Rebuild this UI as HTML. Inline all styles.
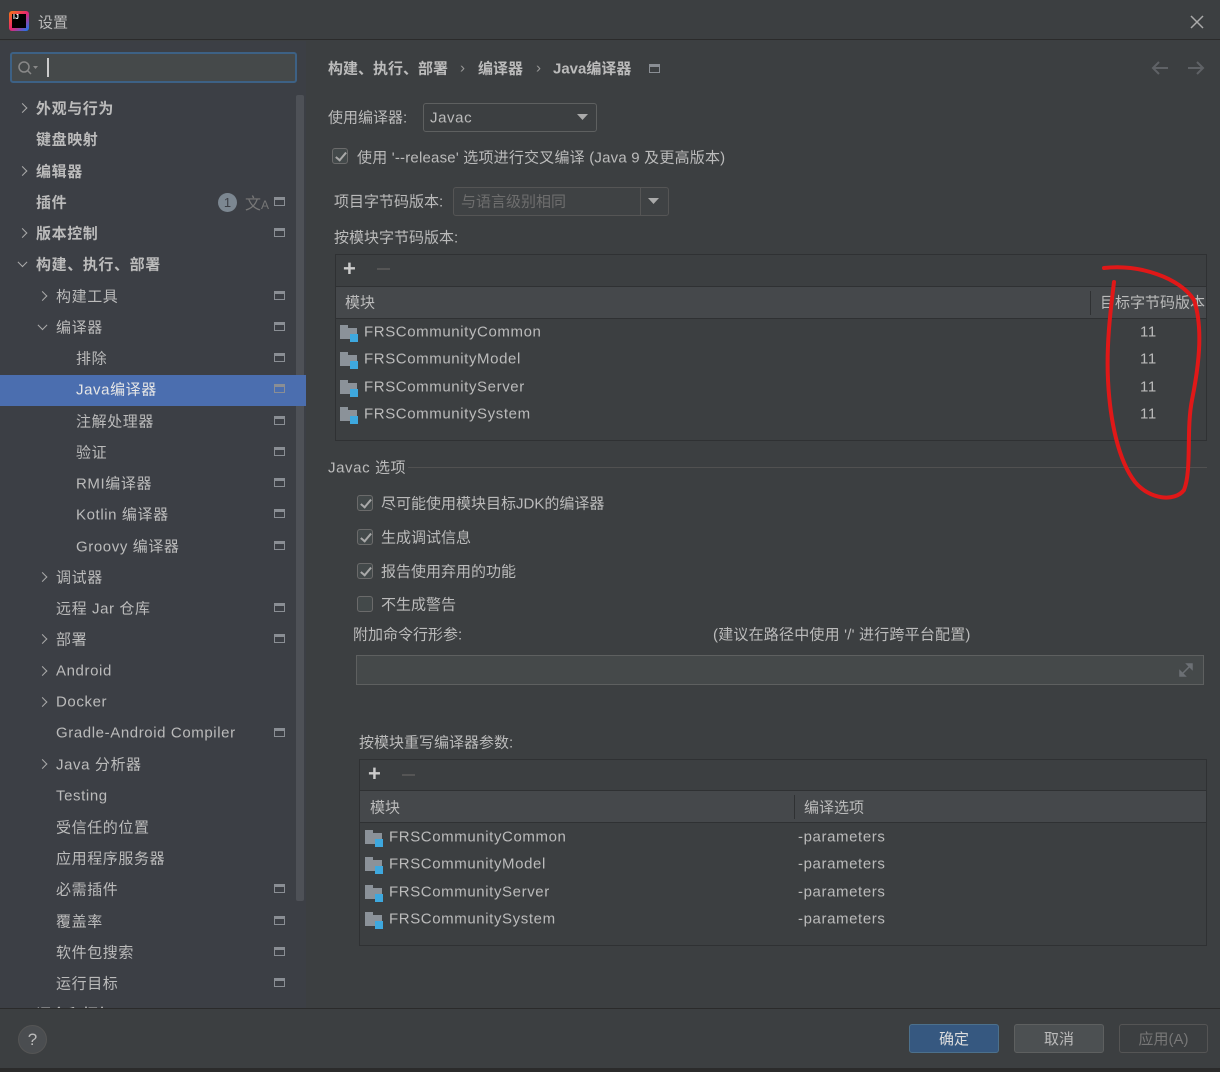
<!DOCTYPE html>
<html><head><meta charset="utf-8"><style>
*{margin:0;padding:0;box-sizing:border-box}
body{width:1220px;height:1072px;background:#3c3f41;font-family:"Liberation Sans","Noto Sans CJK SC",sans-serif;color:#bbbbbb;font-size:15px;position:relative;overflow:hidden}
.a{position:absolute;white-space:nowrap}
.t{transform:translateY(-50%)}
.ls{letter-spacing:0.6px}
.row{position:absolute;left:0;width:296px;height:31px}
.ic{position:absolute;left:274px;top:50%;margin-top:-5px;width:11px;height:9px;border:1.5px solid #8a8e94;border-top-width:3px}
.arr{position:absolute;top:50%;width:7px;height:7px;border-right:1.5px solid #aaa;border-bottom:1.5px solid #aaa}
.ar{transform:translateY(-50%) rotate(-45deg)}
.ad{transform:translateY(-75%) rotate(45deg)}
.b{font-weight:bold}
.cb{position:absolute;width:16px;height:16px;border:1px solid #6b6b6b;border-radius:3px;background:#43494a}
.cb.on::after{content:"";position:absolute;left:5px;top:1px;width:4px;height:9px;border-right:2px solid #a9a9a9;border-bottom:2px solid #a9a9a9;transform:rotate(40deg)}
.tbl{position:absolute;border:1px solid #2f3133;background:#3c3f41}
.hdr{position:absolute;left:0;right:0;background:#45484b;border-top:1px solid #2f3133;border-bottom:1px solid #2f3133}
.fold{position:absolute;width:18px;height:16px}
.fold::before{content:"";position:absolute;left:0;top:0;width:8px;height:4px;background:#8b9299}
.fold::after{content:"";position:absolute;left:0;top:3px;width:17px;height:11px;background:#8b9299}
.fold i{position:absolute;left:10px;top:9px;width:8px;height:8px;background:#3ea8de;z-index:1}
.btn{position:absolute;top:1024px;width:90px;height:29px;border-radius:3px;text-align:center;line-height:29px;font-size:15px}
</style></head><body>
<div class="a" style="left:0;top:0;width:1220px;height:40px;background:#3c3f41;border-bottom:1px solid #2b2b2b"></div>
<div class="a" style="left:9px;top:11px;width:20px;height:20px;border-radius:3px;background:linear-gradient(135deg,#f97a12,#e8246f 50%,#087cfa)"></div>
<div class="a" style="left:12px;top:14px;width:14px;height:14px;background:#000;color:#fff;font-size:7px;font-weight:bold;line-height:8px;padding-left:1px">IJ</div>
<div class="a t" style="left:38px;top:22px;font-size:15px">设置</div>
<svg class="a" style="left:1190px;top:15px" width="14" height="14"><path d="M1 1L13 13M13 1L1 13" stroke="#aaa" stroke-width="1.5"/></svg>

<div class="a" style="left:0;top:41px;width:306px;height:967px;background:#3c3f45;overflow:hidden">
<div class="a" style="left:10px;top:11px;width:287px;height:31px;border:2px solid #3d6185;border-radius:3px;background:#45494a"></div>
<svg class="a" style="left:17px;top:19px" width="24" height="16"><circle cx="7" cy="7" r="5" stroke="#888" stroke-width="1.5" fill="none"/><path d="M10.5 10.5L14 14" stroke="#888" stroke-width="1.5"/><path d="M16 6h5l-2.5 3z" fill="#888"/></svg>
<div class="a" style="left:47px;top:17px;width:2px;height:19px;background:#ccc"></div>
<div class="a" style="left:296px;top:54px;width:8px;height:806px;background:#4e5157;border-radius:2px"></div>
<div class="row" style="top:334px;width:306px;background:#4b6eaf"></div>
</div>

<div id="rows"></div>
<script>
const items=[
["外观与行为",0,"r",0,1],["键盘映射",0,"",0,1],["编辑器",0,"r",0,1],["插件",0,"",1,1],["版本控制",0,"r",1,1],["构建、执行、部署",0,"d",0,1],
["构建工具",1,"r",1],["编译器",1,"d",1],["排除",2,"",1],["Java编译器",2,"",1],["注解处理器",2,"",1],["验证",2,"",1],["RMI编译器",2,"",1],["Kotlin 编译器",2,"",1],["Groovy 编译器",2,"",1],
["调试器",1,"r",0],["远程 Jar 仓库",1,"",1],["部署",1,"r",1],["Android",1,"r",0],["Docker",1,"r",0],["Gradle-Android Compiler",1,"",1],["Java 分析器",1,"r",0],["Testing",1,"",0],["受信任的位置",1,"",0],["应用程序服务器",1,"",0],["必需插件",1,"",1],["覆盖率",1,"",1],["软件包搜索",1,"",1],["运行目标",1,"",1],["语言和框架",0,"r",0,1]];
let h="";
items.forEach((it,i)=>{
 const cy=108+i*31.25;const tx=[36,56,76][it[1]];const ax=tx-17;
 h+=`<div class="a" style="left:0;top:${cy-15.5}px;width:296px;height:31px">`;
 if(it[2]) h+=`<div class="arr ${it[2]=='r'?'ar':'ad'}" style="left:${ax}px"></div>`;
 h+=`<span class="a t ls${it[4]?' b':''}" style="left:${tx}px;top:50%;${i==9?'color:#e6e6e6':''}">${it[0]}</span>`;
 if(it[3]) h+=`<div class="ic"></div>`;
 h+=`</div>`;
});
document.getElementById("rows").innerHTML=`<div style="position:absolute;left:0;top:41px;width:306px;height:967px;overflow:hidden"><div style="position:absolute;left:0;top:-41px">${h}</div></div>`;
</script>
<div class="a" style="left:218px;top:193px;width:19px;height:19px;border-radius:50%;background:#7c8791;color:#3c3f45;font-size:13px;text-align:center;line-height:19px">1</div>
<div class="a t" style="left:245px;top:202px;color:#777;font-size:16px">文<span style="font-size:12px">A</span></div>

<div class="a t b" style="left:328px;top:68px">构建、执行、部署</div>
<div class="a t" style="left:460px;top:68px;color:#999">›</div>
<div class="a t b" style="left:478px;top:68px">编译器</div>
<div class="a t" style="left:536px;top:68px;color:#999">›</div>
<div class="a t b" style="left:553px;top:68px">Java编译器</div>
<div class="a" style="left:649px;top:64px;width:11px;height:9px;border:1.5px solid #8a8e94;border-top-width:3px"></div>
<svg class="a" style="left:1151px;top:60px" width="56" height="16"><path d="M17 8H2M8 2L2 8l6 6M37 8h15M46 2l6 6-6 6" stroke="#5f6266" stroke-width="2" fill="none"/></svg>

<div class="a t" style="left:328px;top:117px">使用编译器:</div>
<div class="a" style="left:423px;top:103px;width:174px;height:29px;border:1px solid #5e6060;border-radius:3px;background:#3c3f41"></div>
<div class="a t ls" style="left:430px;top:118px">Javac</div>
<svg class="a" style="left:577px;top:114px" width="12" height="8"><path d="M0 0h11l-5.5 6z" fill="#aaa"/></svg>

<div class="cb on" style="left:332px;top:148px"></div>
<div class="a t ls" style="left:357px;top:157px;letter-spacing:0.2px">使用 '--release' 选项进行交叉编译 (Java 9 及更高版本)</div>

<div class="a t" style="left:334px;top:201px">项目字节码版本:</div>
<div class="a" style="left:453px;top:187px;width:216px;height:29px;border:1px solid #555;border-radius:3px;background:#3f4244"></div>
<div class="a" style="left:640px;top:188px;width:1px;height:27px;background:#555"></div>
<div class="a t" style="left:461px;top:201px;color:#6e6e6e">与语言级别相同</div>
<svg class="a" style="left:648px;top:198px" width="12" height="8"><path d="M0 0h11l-5.5 6z" fill="#aaa"/></svg>

<div class="a t" style="left:334px;top:237px">按模块字节码版本:</div>
<div class="tbl" style="left:335px;top:254px;width:872px;height:187px">
 <div class="hdr" style="top:31px;height:33px"></div>
 <div class="a" style="left:754px;top:36px;width:1px;height:24px;background:#2f3133"></div>
</div>
<div class="a t" style="left:343px;top:269px;font-size:22px;font-weight:bold;color:#ccc">+</div>
<div class="a" style="left:377px;top:268px;width:13px;height:2px;background:#555"></div>
<div class="a t" style="left:345px;top:302px">模块</div>
<div class="a t" style="left:1100px;top:302px">目标字节码版本</div>

<div class="fold" style="left:340px;top:325px"><i></i></div><div class="a t ls" style="left:364px;top:332px">FRSCommunityCommon</div><div class="a t ls" style="left:1140px;top:332px">11</div>
<div class="fold" style="left:340px;top:352px"><i></i></div><div class="a t ls" style="left:364px;top:359px">FRSCommunityModel</div><div class="a t ls" style="left:1140px;top:359px">11</div>
<div class="fold" style="left:340px;top:380px"><i></i></div><div class="a t ls" style="left:364px;top:387px">FRSCommunityServer</div><div class="a t ls" style="left:1140px;top:387px">11</div>
<div class="fold" style="left:340px;top:407px"><i></i></div><div class="a t ls" style="left:364px;top:414px">FRSCommunitySystem</div><div class="a t ls" style="left:1140px;top:414px">11</div>

<div class="a t ls" style="left:328px;top:467px">Javac 选项</div>
<div class="a" style="left:408px;top:467px;width:799px;height:1px;background:#515151"></div>

<div class="cb on" style="left:357px;top:495px"></div><div class="a t" style="left:381px;top:503px">尽可能使用模块目标JDK的编译器</div>
<div class="cb on" style="left:357px;top:529px"></div><div class="a t" style="left:381px;top:537px">生成调试信息</div>
<div class="cb on" style="left:357px;top:563px"></div><div class="a t" style="left:381px;top:571px">报告使用弃用的功能</div>
<div class="cb" style="left:357px;top:596px"></div><div class="a t" style="left:381px;top:604px">不生成警告</div>

<div class="a t" style="left:353px;top:634px">附加命令行形参:</div>
<div class="a t" style="left:713px;top:634px;letter-spacing:0.2px">(建议在路径中使用 '/' 进行跨平台配置)</div>
<div class="a" style="left:356px;top:655px;width:848px;height:30px;border:1px solid #5e6060;background:#45494a"></div>
<svg class="a" style="left:1177px;top:661px" width="18" height="18"><path d="M10 3h5v5zM3 15v-5l5 5zM12 6L6 12" stroke="#6c7075" stroke-width="1.5" fill="#6c7075"/></svg>

<div class="a t" style="left:359px;top:742px">按模块重写编译器参数:</div>
<div class="tbl" style="left:359px;top:759px;width:848px;height:187px">
 <div class="hdr" style="top:30px;height:33px"></div>
 <div class="a" style="left:434px;top:35px;width:1px;height:24px;background:#2f3133"></div>
</div>
<div class="a t" style="left:368px;top:774px;font-size:22px;font-weight:bold;color:#ccc">+</div>
<div class="a" style="left:402px;top:774px;width:13px;height:2px;background:#555"></div>
<div class="a t" style="left:370px;top:807px">模块</div>
<div class="a t" style="left:804px;top:807px">编译选项</div>
<div class="fold" style="left:365px;top:830px"><i></i></div><div class="a t ls" style="left:389px;top:837px">FRSCommunityCommon</div><div class="a t ls" style="left:798px;top:837px">-parameters</div>
<div class="fold" style="left:365px;top:857px"><i></i></div><div class="a t ls" style="left:389px;top:864px">FRSCommunityModel</div><div class="a t ls" style="left:798px;top:864px">-parameters</div>
<div class="fold" style="left:365px;top:885px"><i></i></div><div class="a t ls" style="left:389px;top:892px">FRSCommunityServer</div><div class="a t ls" style="left:798px;top:892px">-parameters</div>
<div class="fold" style="left:365px;top:912px"><i></i></div><div class="a t ls" style="left:389px;top:919px">FRSCommunitySystem</div><div class="a t ls" style="left:798px;top:919px">-parameters</div>

<svg class="a" style="left:0;top:0" width="1220" height="1072"><path d="M1104 268C1140 264 1180 278 1194 300C1204 330 1198 370 1192 400C1186 430 1192 470 1184 490C1175 502 1150 500 1135 482C1118 460 1110 420 1108 380C1106 340 1112 300 1114 282" stroke="#e01818" stroke-width="4" fill="none" stroke-linecap="round"/></svg>

<div class="a" style="left:0;top:1008px;width:1220px;height:60px;background:#3c3f41;border-top:1px solid #2b2b2b"></div>
<div class="a" style="left:0;top:1068px;width:1220px;height:4px;background:#2b2b2b"></div>
<div class="a" style="left:18px;top:1025px;width:29px;height:29px;border-radius:50%;background:#4a4d50;border:1px solid #555;text-align:center;line-height:27px;font-size:17px">?</div>
<div class="btn" style="left:909px;background:#365880;border:1px solid #4c708c;color:#ddd">确定</div>
<div class="btn" style="left:1014px;background:#4c5052;border:1px solid #5e6060">取消</div>
<div class="btn" style="left:1119px;border:1px solid #555;color:#777;width:89px">应用(A)</div>
</body></html>
